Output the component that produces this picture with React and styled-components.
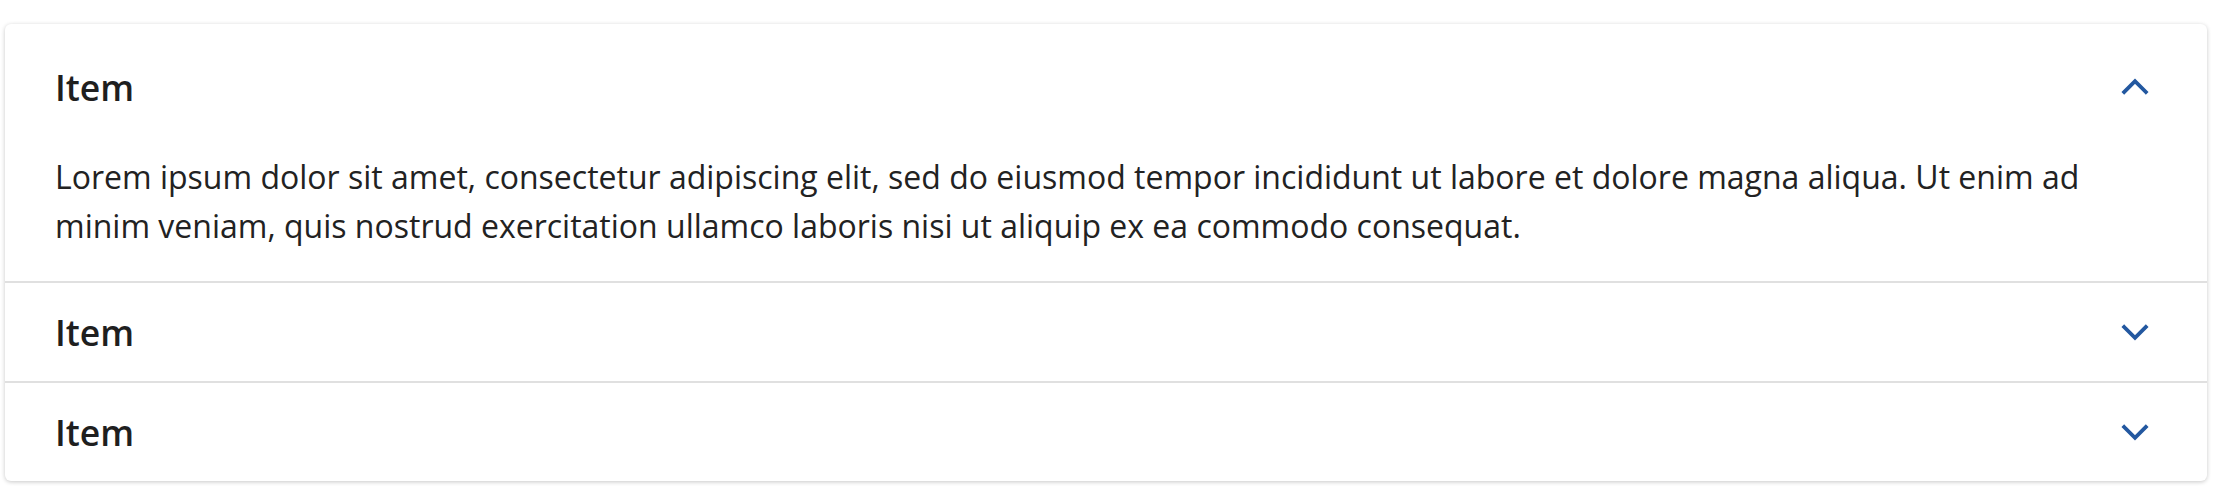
import React, { useState } from 'react';
import styled, { createGlobalStyle } from 'styled-components';

const GlobalStyle = createGlobalStyle`
  body {
    margin: 0;
    background: #fff;
    font-family: "Open Sans", "Liberation Sans", sans-serif;
  }
`;

const Page = styled.div`
  padding: 24px 13px 18px 5px;
`;

const Card = styled.div`
  background: #fff;
  border-radius: 6px;
  box-shadow: 0 1px 4px rgba(0, 0, 0, 0.22);
  overflow: hidden;
`;

const Item = styled.div`
  & + & {
    border-top: 2px solid #e0e0e0;
  }
`;

const Header = styled.button`
  display: flex;
  align-items: center;
  justify-content: space-between;
  width: 100%;
  height: ${(p) => (p.open ? '128px' : '98px')};
  padding: ${(p) => (p.open ? '12px 52px 14px 50px' : '0 52px 0 50px')};
  border: none;
  background: transparent;
  cursor: pointer;
  font-family: inherit;
`;

const Title = styled.span`
  font-size: 35.5px;
  font-weight: 600;
  color: #1f1f1f;
`;

const Body = styled.div`
  padding: 0 100px 31px 50px;
  font-size: 32px;
  line-height: 49px;
  color: #222;
`;

const Chevron = ({ up }) => (
  <svg width="40" height="40" viewBox="0 0 24 24" fill="none"
    stroke="#2358a0" strokeWidth="2.3" strokeLinecap="square"
    style={{ transform: up ? 'rotate(180deg)' : 'none' }}>
    <polyline points="5.5,9 12,15.5 18.5,9" />
  </svg>
);

const text = 'Lorem ipsum dolor sit amet, consectetur adipiscing elit, sed do eiusmod tempor incididunt ut labore et dolore magna aliqua. Ut enim ad minim veniam, quis nostrud exercitation ullamco laboris nisi ut aliquip ex ea commodo consequat.';

export default function App() {
  const [open, setOpen] = useState(0);
  return (
    <Page>
      <GlobalStyle />
      <Card>
        {[0, 1, 2].map((i) => (
          <Item key={i}>
            <Header open={open === i} onClick={() => setOpen(open === i ? -1 : i)}>
              <Title>Item</Title>
              <Chevron up={open === i} />
            </Header>
            {open === i && <Body>{text}</Body>}
          </Item>
        ))}
      </Card>
    </Page>
  );
}
